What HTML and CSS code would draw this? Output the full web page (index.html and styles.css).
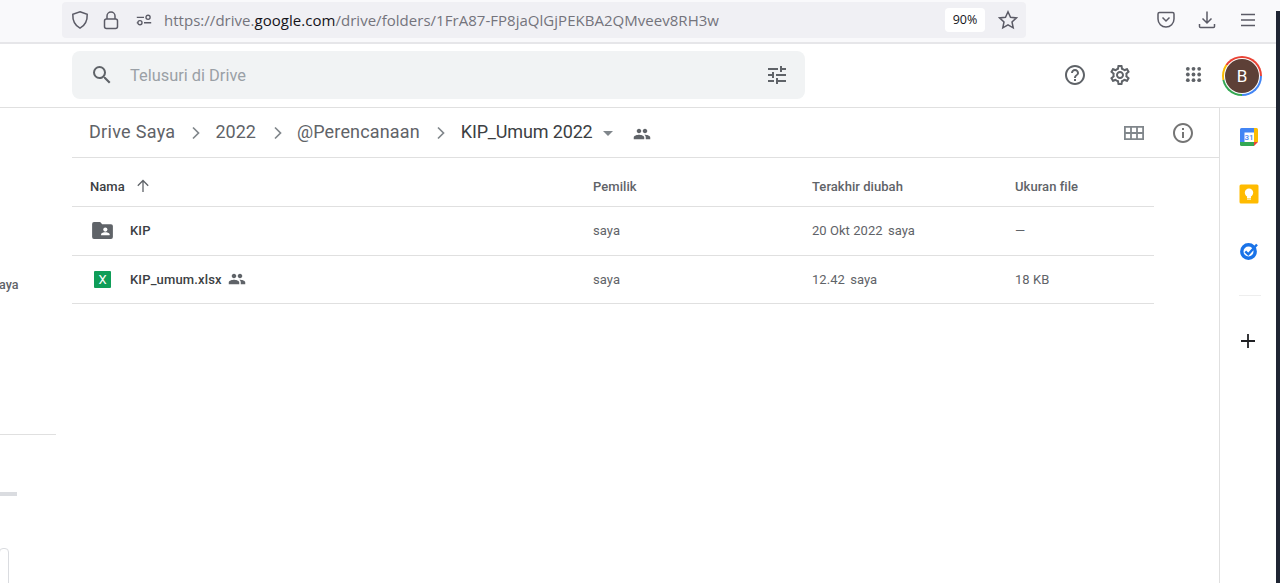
FILE: index.html
```html
<!DOCTYPE html>
<html lang="en">
<head>
  <meta charset="UTF-8">
  <title>KIP_Umum 2022 - Google Drive</title>
  <meta name="viewport" content="width=device-width, initial-scale=1.0">
  <link rel="stylesheet" href="styles.css">
</head>
<body>

  <!-- Browser toolbar -->
  <div class="toolbar">
    <div class="urlbar">
      <svg class="tool-icon shield" viewBox="0 0 20 20"><path d="M10 1.800 17.200 4.200c.3 6.800-2.300 11.300-7.200 14-4.900-2.700-7.500-7.200-7.200-14z"/></svg>
      <svg class="tool-icon lock" viewBox="0 0 20 20"><rect x="3.500" y="9" width="13" height="9.500" rx="2"/><path d="M6 9V6a4 4 0 0 1 8 0v3"/></svg>
      <svg class="tool-icon perms" viewBox="0 0 20 20"><path d="M2 7h8M2 13h1M10 13h8"/><circle cx="14.500" cy="7" r="2.300"/><circle cx="5.500" cy="13" r="2.300"/></svg>
      <div class="url">https://drive.<b>google.com</b>/drive/folders/1FrA87-FP8jaQlGjPEKBA2QMveev8RH3w</div>
      <div class="zoom-badge">90%</div>
      <svg class="tool-icon star" viewBox="0 0 20 20"><path d="M10 1.800 12.500 7.200 18.400 7.900 14 11.900 15.200 17.800 10 14.800 4.800 17.800 6 11.900 1.600 7.900 7.500 7.200z"/></svg>
    </div>
    <div class="toolbar-right">
      <svg class="tool-icon" viewBox="0 0 20 20"><path d="M3.500 2.500h13a1.500 1.500 0 0 1 1.500 1.500v5a8 8 0 0 1-16 0V4a1.500 1.500 0 0 1 1.500-1.500z"/><path d="M6.500 7.500 10 11l3.500-3.500"/></svg>
      <svg class="tool-icon" viewBox="0 0 20 20"><path d="M10 1.500v11.500M5.500 8.500 10 13l4.500-4.500M2.500 14v2.500a1 1 0 0 0 1 1h13a1 1 0 0 0 1-1V14"/></svg>
      <svg class="tool-icon" viewBox="0 0 20 20"><path d="M3 4.500h14M3 10h14M3 15.500h14"/></svg>
    </div>
  </div>
  <div class="edge-strip"></div>

  <!-- Drive header -->
  <header class="drive-header">
    <div class="search">
      <svg class="search-icon" viewBox="0 0 24 24"><path d="M15.500 14h-.79l-.28-.27A6.470 6.470 0 0 0 16 9.500 6.500 6.500 0 1 0 9.500 16c1.610 0 3.090-.59 4.230-1.570l.27.28v.79l5 4.990L20.490 19l-4.990-5zm-6 0C7.010 14 5 11.990 5 9.500S7.010 5 9.500 5 14 7.010 14 9.500 11.990 14 9.500 14z"/></svg>
      <span class="search-text">Telusuri di Drive</span>
      <svg class="tune-icon" viewBox="0 0 24 24"><path d="M3 17v2h6v-2H3zM3 5v2h10V5H3zm10 16v-2h8v-2h-8v-2h-2v6h2zM7 9v2H3v2h4v2h2V9H7zm14 4v-2H11v2h10zm-6-4h2V7h4V5h-4V3h-2v6z"/></svg>
    </div>
    <div class="header-actions">
      <svg class="head-icon help" viewBox="0 0 24 24"><path d="M11 18h2v-2h-2v2zm1-16C6.480 2 2 6.480 2 12s4.480 10 10 10 10-4.480 10-10S17.520 2 12 2zm0 18c-4.410 0-8-3.590-8-8s3.590-8 8-8 8 3.590 8 8-3.590 8-8 8zm0-14c-2.210 0-4 1.790-4 4h2c0-1.100.9-2 2-2s2 .9 2 2c0 2-3 1.750-3 5h2c0-2.250 3-2.500 3-5 0-2.210-1.790-4-4-4z"/></svg>
      <svg class="head-icon gear" viewBox="0 0 24 24"><path d="M19.430 12.980c.04-.32.07-.64.07-.98s-.03-.66-.07-.98l2.110-1.650c.19-.15.24-.42.12-.64l-2-3.460c-.12-.22-.39-.3-.61-.22l-2.490 1c-.52-.4-1.080-.73-1.690-.98l-.38-2.650A.488.488 0 0 0 14 2h-4c-.25 0-.46.18-.49.42l-.38 2.650c-.61.25-1.170.59-1.690.98l-2.490-1c-.23-.09-.49 0-.61.22l-2 3.460c-.13.22-.07.49.12.64l2.110 1.650c-.04.32-.07.65-.07.98s.03.66.07.98l-2.110 1.650c-.19.15-.24.42-.12.64l2 3.460c.12.22.39.3.61.22l2.490-1c.52.4 1.080.73 1.690.98l.38 2.650c.03.24.24.42.49.42h4c.25 0 .46-.18.49-.42l.38-2.650c.61-.25 1.170-.59 1.690-.98l2.490 1c.23.09.49 0 .61-.22l2-3.460c.12-.22.07-.49-.12-.64l-2.110-1.650zM17.450 11.270c.04.31.05.52.05.73 0 .21-.02.43-.05.73l-.14 1.130.89.7 1.080.84-.7 1.210-1.270-.51-1.040-.42-.9.68c-.43.32-.84.56-1.250.73l-1.060.43-.16 1.130-.2 1.350h-1.400l-.19-1.350-.16-1.130-1.060-.43c-.43-.18-.83-.41-1.230-.71l-.91-.7-1.060.43-1.270.51-.7-1.210 1.080-.84.89-.7-.14-1.130c-.03-.31-.05-.54-.05-.74s.02-.43.05-.73l.14-1.130-.89-.7-1.080-.84.7-1.210 1.270.51 1.040.42.9-.68c.43-.32.84-.56 1.250-.73l1.060-.43.16-1.130.2-1.350h1.390l.19 1.350.16 1.130 1.060.43c.43.18.83.41 1.230.71l.91.7 1.060-.43 1.270-.51.7 1.210-1.070.85-.89.7.14 1.130zM12 8c-2.210 0-4 1.790-4 4s1.790 4 4 4 4-1.790 4-4-1.790-4-4-4zm0 6c-1.100 0-2-.9-2-2s.9-2 2-2 2 .9 2 2-.9 2-2 2z"/></svg>
      <svg class="apps-icon" viewBox="0 0 18 18"><circle cx="3" cy="3" r="2"/><circle cx="9" cy="3" r="2"/><circle cx="15" cy="3" r="2"/><circle cx="3" cy="9" r="2"/><circle cx="9" cy="9" r="2"/><circle cx="15" cy="9" r="2"/><circle cx="3" cy="15" r="2"/><circle cx="9" cy="15" r="2"/><circle cx="15" cy="15" r="2"/></svg>
      <div class="avatar-ring"><div class="avatar">B</div></div>
    </div>
  </header>

  <div class="main">
    <!-- Left nav, mostly scrolled out of view -->
    <aside class="sidebar">
      <div class="side-text">aya</div>
      <div class="side-line"></div>
      <div class="side-bar"></div>
      <div class="side-box"></div>
    </aside>

    <section class="content">
      <div class="crumbs">
        <span class="crumb first">Drive Saya</span>
        <svg class="chev" viewBox="0 0 10 14"><path d="M2 1.500 7.500 7 2 12.500"/></svg>
        <span class="crumb year">2022</span>
        <svg class="chev" viewBox="0 0 10 14"><path d="M2 1.500 7.500 7 2 12.500"/></svg>
        <span class="crumb folder">@Perencanaan</span>
        <svg class="chev" viewBox="0 0 10 14"><path d="M2 1.500 7.500 7 2 12.500"/></svg>
        <span class="crumb current">KIP_Umum 2022</span>
        <span class="caret"></span>
        <svg class="people crumb-people" viewBox="0 0 24 24"><path d="M16 11c1.660 0 2.990-1.340 2.990-3S17.660 5 16 5s-3 1.340-3 3 1.340 3 3 3zm-8 0c1.660 0 2.990-1.340 2.990-3S9.660 5 8 5 5 6.340 5 8s1.340 3 3 3zm0 2c-2.330 0-7 1.170-7 3.500V19h14v-2.500C15 14.170 10.330 13 8 13zm8 0c-.29 0-.62.02-.97.05 1.160.84 1.970 1.970 1.970 3.450V19h6v-2.500c0-2.330-4.670-3.500-7-3.500z"/></svg>
        <div class="crumb-actions">
          <svg class="grid-icon" viewBox="0 0 20 14"><path d="M.900.900h18.200v12.200H.900zM.900 7h18.200M7 .900v12.200M13 .900v12.200"/></svg>
          <svg class="info-icon" viewBox="0 0 24 24"><path d="M11 7h2v2h-2V7zm0 4h2v6h-2v-6zm1-9C6.480 2 2 6.480 2 12s4.480 10 10 10 10-4.480 10-10S17.520 2 12 2zm0 18c-4.410 0-8-3.590-8-8s3.590-8 8-8 8 3.590 8 8-3.590 8-8 8z"/></svg>
        </div>
      </div>

      <div class="file-table">
        <div class="row head">
          <div class="name-cell">
            <span class="th-name">Nama</span>
            <svg class="sort-arrow" viewBox="0 0 14 14"><path d="M7 13V1.500M1.800 6.700 7 1.500l5.200 5.200"/></svg>
          </div>
          <div>Pemilik</div>
          <div>Terakhir diubah</div>
          <div>Ukuran file</div>
        </div>
        <div class="row">
          <div class="name-cell">
            <svg class="file-icon" viewBox="0 0 22 18"><path fill="#5f6368" d="M2 0h6.500l2.200 2.300H20a2 2 0 0 1 2 2V16a2 2 0 0 1-2 2H2a2 2 0 0 1-2-2V2a2 2 0 0 1 2-2z"/><circle cx="14" cy="8" r="2.200" fill="#fff"/><path fill="#fff" d="M9.500 14v-1c0-1.400 3-2.100 4.500-2.100s4.500.7 4.500 2.100v1z"/></svg>
            <span class="file-name">KIP</span>
          </div>
          <div>saya</div>
          <div>20 Okt 2022 <span class="by">saya</span></div>
          <div>—</div>
        </div>
        <div class="row">
          <div class="name-cell">
            <div class="xls-icon">X</div>
            <span class="file-name">KIP_umum.xlsx</span>
            <svg class="people row-people" viewBox="0 0 24 24"><path d="M16 11c1.660 0 2.990-1.340 2.990-3S17.660 5 16 5s-3 1.340-3 3 1.340 3 3 3zm-8 0c1.660 0 2.990-1.340 2.990-3S9.660 5 8 5 5 6.340 5 8s1.340 3 3 3zm0 2c-2.330 0-7 1.170-7 3.500V19h14v-2.500C15 14.170 10.330 13 8 13zm8 0c-.29 0-.62.02-.97.05 1.160.84 1.970 1.970 1.970 3.450V19h6v-2.500c0-2.330-4.670-3.500-7-3.500z"/></svg>
          </div>
          <div>saya</div>
          <div>12.42 <span class="by">saya</span></div>
          <div>18 KB</div>
        </div>
      </div>
    </section>

    <!-- Add-ons panel -->
    <aside class="addons">
      <svg class="addon" viewBox="0 0 20 20">
        <rect x="1" y="1" width="18" height="18" rx="1.500" fill="#fff"/>
        <path fill="#4285f4" d="M2.500 1H15v4.500H5.500V15H1V2.500A1.500 1.500 0 0 1 2.500 1z"/>
        <path fill="#fbbc04" d="M15 1h2.500A1.500 1.500 0 0 1 19 2.500V15h-4z"/>
        <path fill="#34a853" d="M1 15h14v4H2.500A1.500 1.500 0 0 1 1 17.500z"/>
        <path fill="#ea4335" d="M15 15h4l-4 4z"/>
        <text class="cal-num" x="10" y="13.400">31</text>
      </svg>
      <svg class="addon" viewBox="0 0 20 20">
        <rect x="0.500" y="0.500" width="19" height="19" rx="1.500" fill="#ffbb00"/>
        <circle cx="10" cy="8.700" r="4.200" fill="#fff"/>
        <rect x="8" y="12.200" width="4" height="1.900" fill="#fff"/>
        <rect x="8" y="14.600" width="4" height="1" fill="#fff"/>
      </svg>
      <svg class="addon tasks" viewBox="0 0 20 20">
        <circle cx="9.500" cy="10.500" r="6.700" fill="none" stroke="#1a73e8" stroke-width="3.400"/>
        <path d="M6.300 10.300 9.300 13.300 18 3.500" fill="none" stroke="#1a73e8" stroke-width="2.400"/>
      </svg>
      <div class="addon-sep"></div>
      <svg class="plus" viewBox="0 0 14 14"><path d="M7 0v14M0 7h14"/></svg>
    </aside>
  </div>

</body>
</html>
```

FILE: styles.css
```css
* {
  box-sizing: border-box;
  margin: 0;
  padding: 0;
}

html, body {
  height: 100%;
  overflow: hidden;
}

body {
  display: flex;
  flex-direction: column;
  font-family: Roboto, 'Liberation Sans', sans-serif;
  background: white;
  color: #3c4043;
}

svg {
  display: block;
  flex-shrink: 0;
}

/* Browser toolbar */
.toolbar {
  height: 44px;
  flex-shrink: 0;
  display: flex;
  align-items: flex-start;
  padding: 2px 0 0 62px;
  background: #f9f9fb;
  border-bottom: 2px solid #e6e6e9;
}

.urlbar {
  width: 964px;
  height: 36px;
  display: flex;
  align-items: center;
  padding-left: 8px;
  background: #f0f0f4;
  border-radius: 4px;
}

.tool-icon {
  width: 20px;
  height: 20px;
  fill: none;
  stroke: #5b5b66;
  stroke-width: 1.500;
}

.lock {
  margin-left: 11px;
}

.perms {
  margin-left: 14px;
  width: 18px;
  height: 18px;
}

.url {
  margin-left: 11px;
  width: 781px;
  font-family: 'Open Sans', sans-serif;
  font-size: 15px;
  letter-spacing: 0.03px;
  white-space: nowrap;
  color: #74747c;
}

.url b {
  font-weight: 400;
  color: #15141a;
}

.zoom-badge {
  width: 40px;
  height: 24px;
  line-height: 24px;
  text-align: center;
  font-family: 'Open Sans', sans-serif;
  font-size: 12.500px;
  color: #15141a;
  background: white;
  border-radius: 4px;
}

.star {
  margin-left: 13px;
}

.toolbar-right {
  display: flex;
  gap: 21px;
  margin: 8px 0 0 130px;
}

.edge-strip {
  position: absolute;
  top: 11px;
  right: 0;
  bottom: 0;
  width: 4px;
  background: #1f2533;
  z-index: 2;
}

/* Drive header */
.drive-header {
  height: 64px;
  flex-shrink: 0;
  display: flex;
  align-items: center;
  padding: 0 18px 2px 72px;
  border-bottom: 1px solid #e0e0e0;
}

.search {
  width: 733px;
  height: 48px;
  display: flex;
  align-items: center;
  padding: 0 16px 0 18px;
  background: #f1f3f4;
  border-radius: 8px;
}

.search-icon {
  width: 24px;
  height: 24px;
  fill: #5f6368;
}

.search-text {
  flex: 1;
  margin: 2px 0 0 16px;
  font-size: 16.400px;
  color: #9aa0a6;
}

.tune-icon {
  width: 24px;
  height: 24px;
  fill: #5f6368;
}

.header-actions {
  flex: 1;
  display: flex;
  align-items: center;
  justify-content: flex-end;
}

.head-icon {
  width: 24px;
  height: 24px;
  fill: #5f6368;
}

.gear {
  margin-left: 21px;
}

.apps-icon {
  width: 17px;
  height: 17px;
  margin-left: 53px;
  fill: #5f6368;
}

.avatar-ring {
  width: 40px;
  height: 40px;
  margin: 2px 0 0 20px;
  padding: 3px;
  border-radius: 50%;
  background: conic-gradient(#ea4335 0 25%, #4285f4 25% 50%, #34a853 50% 72%, #fbbc04 72% 85%, #ea4335 85% 100%);
}

.avatar {
  width: 34px;
  height: 34px;
  line-height: 34px;
  text-align: center;
  font-size: 17px;
  color: white;
  background: #5d4037;
  border-radius: 50%;
  box-shadow: 0 0 0 1px white;
}

/* Main area */
.main {
  flex: 1;
  display: flex;
  min-height: 0;
}

.sidebar {
  width: 72px;
  flex-shrink: 0;
  position: relative;
  overflow: hidden;
}

.side-text {
  margin: 169px 0 0 -1px;
  font-size: 12.500px;
  font-weight: 500;
  color: #5f6368;
}

.side-line {
  width: 56px;
  height: 1px;
  margin-top: 142px;
  background: #e0e0e0;
}

.side-bar {
  width: 17px;
  height: 4px;
  margin-top: 57px;
  background: #dadce0;
}

.side-box {
  width: 10px;
  height: 40px;
  margin: 52px 0 0 -1px;
  border: 1px solid #dadce0;
  border-radius: 4px;
}

.content {
  flex: 1;
  min-width: 0;
}

.crumbs {
  height: 50px;
  display: flex;
  align-items: center;
  padding: 0 24px 0 17px;
  border-bottom: 1px solid #e0e0e0;
}

.crumb {
  margin-bottom: 2px;
  font-size: 18px;
  color: #5f6368;
  white-space: nowrap;
}

.crumb.first {
  letter-spacing: 0.3px;
}

.crumb.year {
  margin-right: 1px;
}

.crumb.folder {
  letter-spacing: 0.15px;
}

.crumb.current {
  margin-left: 1px;
  letter-spacing: -0.15px;
  color: #3c4043;
}

.chev {
  width: 10px;
  height: 14px;
  margin: 0 14px 0 16px;
  fill: none;
  stroke: #80868b;
  stroke-width: 1.700;
}

.caret {
  width: 0;
  height: 0;
  margin: 2px 0 0 10px;
  border-left: 5.500px solid transparent;
  border-right: 5.500px solid transparent;
  border-top: 5.500px solid #80868b;
}

.people {
  fill: #5f6368;
}

.crumb-people {
  width: 18px;
  height: 18px;
  margin: 3px 0 0 20px;
}

.crumb-actions {
  margin-left: auto;
  display: flex;
  align-items: center;
  gap: 27px;
}

.grid-icon {
  width: 20px;
  height: 14px;
  fill: none;
  stroke: #80868b;
  stroke-width: 1.800;
}

.info-icon {
  width: 24px;
  height: 24px;
  fill: #757575;
}

/* File list */
.file-table {
  width: 1082px;
  font-size: 13px;
  letter-spacing: 0.05px;
  color: #5f6368;
}

.row {
  display: grid;
  grid-template-columns: 521px 219px 203px 1fr;
  align-items: center;
  height: 48.500px;
  border-bottom: 1px solid #e0e0e0;
}

.row.head {
  font-weight: 500;
  height: 49px;
  padding-top: 8px;
}

.name-cell {
  display: flex;
  align-items: center;
  padding-left: 18px;
}

.th-name {
  color: #3c4043;
}

.sort-arrow {
  width: 14px;
  height: 14px;
  margin-left: 11px;
  fill: none;
  stroke: #5f6368;
  stroke-width: 1.300;
}

.file-icon {
  width: 21px;
  height: 17px;
  margin: 0 17px 0 2px;
}

.xls-icon {
  width: 17px;
  height: 17px;
  margin: 0 19px 0 4px;
  line-height: 17px;
  text-align: center;
  font-size: 13px;
  color: white;
  background: #0f9d58;
  border-radius: 1px;
}

.file-name {
  font-weight: 500;
  letter-spacing: 0.15px;
  color: #3c4043;
}

.row-people {
  width: 18px;
  height: 18px;
  margin-left: 6px;
  margin-top: -1px;
}

.by {
  margin-left: 2px;
}

/* Add-ons */
.addons {
  width: 61px;
  flex-shrink: 0;
  display: flex;
  flex-direction: column;
  align-items: flex-start;
  padding: 19px 0 0 19px;
  border-left: 1px solid #e0e0e0;
}

.addon {
  width: 20px;
  height: 20px;
  margin-bottom: 37px;
}

.tasks {
  margin-bottom: 34px;
}

.cal-num {
  font-size: 8px;
  font-weight: 500;
  fill: #4285f4;
  text-anchor: middle;
}

.addon-sep {
  width: 22px;
  height: 1px;
  background: #eeeeee;
}

.plus {
  width: 14px;
  height: 14px;
  margin: 38px 0 0 2px;
  fill: none;
  stroke: #202124;
  stroke-width: 1.800;
}
```
